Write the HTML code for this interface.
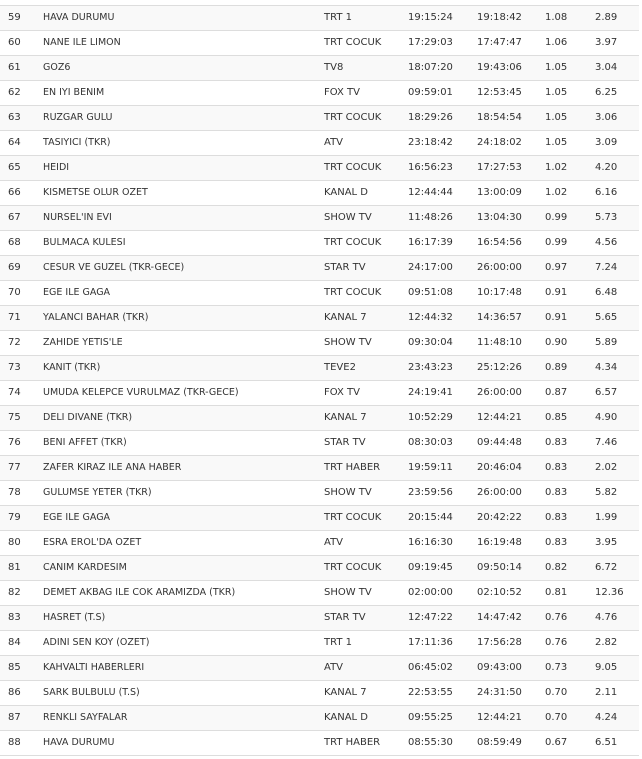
<!DOCTYPE html>
<html><head><style>
body{margin:0;background:#fff;font-family:"DejaVu Sans","Liberation Sans",sans-serif;font-size:10px;color:#333;}
.t{position:absolute;left:0;top:5px;width:639px;}
.r{position:relative;height:24px;border-top:1px solid #ddd;}
.r:nth-child(odd){background:#f9f9f9}
.r span{position:absolute;top:6px;white-space:nowrap}
.a{left:8px}.b{left:43px;font-size:9.5px}.c{left:324px}.d{left:408px}.e{left:477px}.f{left:545px}.g{left:595px}
.end{border-top:1px solid #ddd;height:0}
</style></head><body><div class="t">
<div class="r"><span class="a">59</span><span class="b">HAVA DURUMU</span><span class="c">TRT 1</span><span class="d">19:15:24</span><span class="e">19:18:42</span><span class="f">1.08</span><span class="g">2.89</span></div>
<div class="r"><span class="a">60</span><span class="b">NANE ILE LIMON</span><span class="c">TRT COCUK</span><span class="d">17:29:03</span><span class="e">17:47:47</span><span class="f">1.06</span><span class="g">3.97</span></div>
<div class="r"><span class="a">61</span><span class="b">GOZ6</span><span class="c">TV8</span><span class="d">18:07:20</span><span class="e">19:43:06</span><span class="f">1.05</span><span class="g">3.04</span></div>
<div class="r"><span class="a">62</span><span class="b">EN IYI BENIM</span><span class="c">FOX TV</span><span class="d">09:59:01</span><span class="e">12:53:45</span><span class="f">1.05</span><span class="g">6.25</span></div>
<div class="r"><span class="a">63</span><span class="b">RUZGAR GULU</span><span class="c">TRT COCUK</span><span class="d">18:29:26</span><span class="e">18:54:54</span><span class="f">1.05</span><span class="g">3.06</span></div>
<div class="r"><span class="a">64</span><span class="b">TASIYICI (TKR)</span><span class="c">ATV</span><span class="d">23:18:42</span><span class="e">24:18:02</span><span class="f">1.05</span><span class="g">3.09</span></div>
<div class="r"><span class="a">65</span><span class="b">HEIDI</span><span class="c">TRT COCUK</span><span class="d">16:56:23</span><span class="e">17:27:53</span><span class="f">1.02</span><span class="g">4.20</span></div>
<div class="r"><span class="a">66</span><span class="b">KISMETSE OLUR OZET</span><span class="c">KANAL D</span><span class="d">12:44:44</span><span class="e">13:00:09</span><span class="f">1.02</span><span class="g">6.16</span></div>
<div class="r"><span class="a">67</span><span class="b">NURSEL'IN EVI</span><span class="c">SHOW TV</span><span class="d">11:48:26</span><span class="e">13:04:30</span><span class="f">0.99</span><span class="g">5.73</span></div>
<div class="r"><span class="a">68</span><span class="b">BULMACA KULESI</span><span class="c">TRT COCUK</span><span class="d">16:17:39</span><span class="e">16:54:56</span><span class="f">0.99</span><span class="g">4.56</span></div>
<div class="r"><span class="a">69</span><span class="b">CESUR VE GUZEL (TKR-GECE)</span><span class="c">STAR TV</span><span class="d">24:17:00</span><span class="e">26:00:00</span><span class="f">0.97</span><span class="g">7.24</span></div>
<div class="r"><span class="a">70</span><span class="b">EGE ILE GAGA</span><span class="c">TRT COCUK</span><span class="d">09:51:08</span><span class="e">10:17:48</span><span class="f">0.91</span><span class="g">6.48</span></div>
<div class="r"><span class="a">71</span><span class="b">YALANCI BAHAR (TKR)</span><span class="c">KANAL 7</span><span class="d">12:44:32</span><span class="e">14:36:57</span><span class="f">0.91</span><span class="g">5.65</span></div>
<div class="r"><span class="a">72</span><span class="b">ZAHIDE YETIS'LE</span><span class="c">SHOW TV</span><span class="d">09:30:04</span><span class="e">11:48:10</span><span class="f">0.90</span><span class="g">5.89</span></div>
<div class="r"><span class="a">73</span><span class="b">KANIT (TKR)</span><span class="c">TEVE2</span><span class="d">23:43:23</span><span class="e">25:12:26</span><span class="f">0.89</span><span class="g">4.34</span></div>
<div class="r"><span class="a">74</span><span class="b">UMUDA KELEPCE VURULMAZ (TKR-GECE)</span><span class="c">FOX TV</span><span class="d">24:19:41</span><span class="e">26:00:00</span><span class="f">0.87</span><span class="g">6.57</span></div>
<div class="r"><span class="a">75</span><span class="b">DELI DIVANE (TKR)</span><span class="c">KANAL 7</span><span class="d">10:52:29</span><span class="e">12:44:21</span><span class="f">0.85</span><span class="g">4.90</span></div>
<div class="r"><span class="a">76</span><span class="b">BENI AFFET (TKR)</span><span class="c">STAR TV</span><span class="d">08:30:03</span><span class="e">09:44:48</span><span class="f">0.83</span><span class="g">7.46</span></div>
<div class="r"><span class="a">77</span><span class="b">ZAFER KIRAZ ILE ANA HABER</span><span class="c">TRT HABER</span><span class="d">19:59:11</span><span class="e">20:46:04</span><span class="f">0.83</span><span class="g">2.02</span></div>
<div class="r"><span class="a">78</span><span class="b">GULUMSE YETER (TKR)</span><span class="c">SHOW TV</span><span class="d">23:59:56</span><span class="e">26:00:00</span><span class="f">0.83</span><span class="g">5.82</span></div>
<div class="r"><span class="a">79</span><span class="b">EGE ILE GAGA</span><span class="c">TRT COCUK</span><span class="d">20:15:44</span><span class="e">20:42:22</span><span class="f">0.83</span><span class="g">1.99</span></div>
<div class="r"><span class="a">80</span><span class="b">ESRA EROL'DA OZET</span><span class="c">ATV</span><span class="d">16:16:30</span><span class="e">16:19:48</span><span class="f">0.83</span><span class="g">3.95</span></div>
<div class="r"><span class="a">81</span><span class="b">CANIM KARDESIM</span><span class="c">TRT COCUK</span><span class="d">09:19:45</span><span class="e">09:50:14</span><span class="f">0.82</span><span class="g">6.72</span></div>
<div class="r"><span class="a">82</span><span class="b">DEMET AKBAG ILE COK ARAMIZDA (TKR)</span><span class="c">SHOW TV</span><span class="d">02:00:00</span><span class="e">02:10:52</span><span class="f">0.81</span><span class="g">12.36</span></div>
<div class="r"><span class="a">83</span><span class="b">HASRET (T.S)</span><span class="c">STAR TV</span><span class="d">12:47:22</span><span class="e">14:47:42</span><span class="f">0.76</span><span class="g">4.76</span></div>
<div class="r"><span class="a">84</span><span class="b">ADINI SEN KOY (OZET)</span><span class="c">TRT 1</span><span class="d">17:11:36</span><span class="e">17:56:28</span><span class="f">0.76</span><span class="g">2.82</span></div>
<div class="r"><span class="a">85</span><span class="b">KAHVALTI HABERLERI</span><span class="c">ATV</span><span class="d">06:45:02</span><span class="e">09:43:00</span><span class="f">0.73</span><span class="g">9.05</span></div>
<div class="r"><span class="a">86</span><span class="b">SARK BULBULU (T.S)</span><span class="c">KANAL 7</span><span class="d">22:53:55</span><span class="e">24:31:50</span><span class="f">0.70</span><span class="g">2.11</span></div>
<div class="r"><span class="a">87</span><span class="b">RENKLI SAYFALAR</span><span class="c">KANAL D</span><span class="d">09:55:25</span><span class="e">12:44:21</span><span class="f">0.70</span><span class="g">4.24</span></div>
<div class="r"><span class="a">88</span><span class="b">HAVA DURUMU</span><span class="c">TRT HABER</span><span class="d">08:55:30</span><span class="e">08:59:49</span><span class="f">0.67</span><span class="g">6.51</span></div>
<div class="end"></div>
</div></body></html>
